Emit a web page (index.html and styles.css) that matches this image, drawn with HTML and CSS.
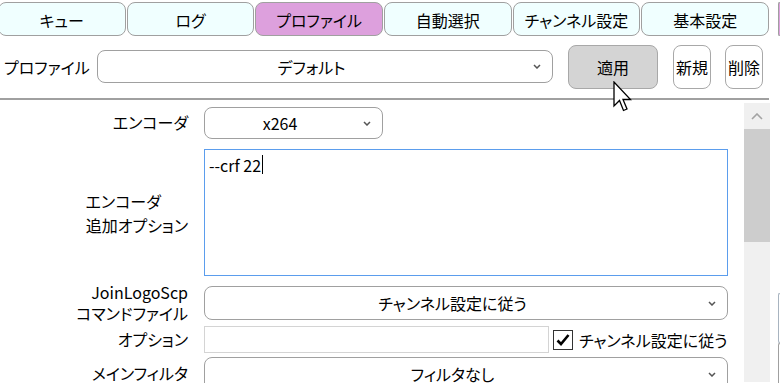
FILE: index.html
```html
<!DOCTYPE html>
<html>
<head>
    <title>プロファイル</title>
    <link rel="stylesheet" href="styles.css">
</head>
<body>
    <div class="screen">
        <div class="app">
            <nav class="tabs">
                <div class="tab">キュー</div>
                <div class="tab">ログ</div>
                <div class="tab active">プロファイル</div>
                <div class="tab">自動選択</div>
                <div class="tab">チャンネル設定</div>
                <div class="tab">基本設定</div>
            </nav>

            <div class="profile-bar">
                <span class="profile-label">プロファイル</span>
                <div class="select profile-select">
                    <span class="select-text">デフォルト</span>
                    <svg class="chevron" width="8" height="5" viewBox="0 0 8 5"><path d="M1 1 L4 4 L7 1" /></svg>
                </div>
                <button class="btn apply">適用</button>
                <button class="btn small new">新規</button>
                <button class="btn small">削除</button>
            </div>

            <div class="body">
                <div class="form">
                    <div class="row row-encoder">
                        <div class="label"><span>エンコーダ</span></div>
                        <div class="select encoder-select">
                            <span class="select-text">x264</span>
                            <svg class="chevron" width="8" height="5" viewBox="0 0 8 5"><path d="M1 1 L4 4 L7 1" /></svg>
                        </div>
                    </div>
                    <div class="row row-extra">
                        <div class="label"><span class="two-line">エンコーダ<br>追加オプション</span></div>
                        <div class="textarea"><span>--crf 22</span><span class="caret"></span></div>
                    </div>
                    <div class="row row-jls">
                        <div class="label"><span class="two-line tight">JoinLogoScp<br>コマンドファイル</span></div>
                        <div class="select wide-select">
                            <span class="select-text">チャンネル設定に従う</span>
                            <svg class="chevron" width="8" height="5" viewBox="0 0 8 5"><path d="M1 1 L4 4 L7 1" /></svg>
                        </div>
                    </div>
                    <div class="row row-opt">
                        <div class="label"><span>オプション</span></div>
                        <div class="opt-field">
                            <div class="textbox"></div>
                            <label class="check">
                                <span class="box">
                                    <svg width="16" height="16" viewBox="0 0 16 16"><path d="M2.5 8.5 L6 12 L13.5 3" /></svg>
                                </span>
                                <span>チャンネル設定に従う</span>
                            </label>
                        </div>
                    </div>
                    <div class="row row-filter">
                        <div class="label"><span>メインフィルタ</span></div>
                        <div class="select wide-select filter-select">
                            <span class="select-text">フィルタなし</span>
                            <svg class="chevron" width="8" height="5" viewBox="0 0 8 5"><path d="M1 1 L4 4 L7 1" /></svg>
                        </div>
                    </div>
                </div>

                <div class="scrollbar">
                    <div class="scroll-up">
                        <svg width="12" height="7" viewBox="0 0 12 7"><path d="M1 6 L6 1 L11 6" /></svg>
                    </div>
                    <div class="scroll-thumb"></div>
                </div>
            </div>
        </div>

        <div class="side">
            <div class="side-tab"></div>
            <div class="side-box"></div>
            <div class="side-box lower"></div>
        </div>

        <!-- mouse pointer over the apply button -->
        <svg class="cursor" width="20" height="32" viewBox="0 0 20 32">
            <path d="M1 1 L1 25 L6.5 19.5 L10.5 29.5 L14 28 L10 18.5 L17.5 18.5 Z" />
        </svg>
    </div>
</body>
</html>
```

FILE: styles.css
```css
* {
    box-sizing: border-box;
}
body {
    margin: 0;
    background: white;
    font-family: "Noto Sans CJK JP", "Noto Sans", sans-serif;
    font-size: 16px;
    font-feature-settings: "palt";
    color: #000;
    overflow: hidden;
}
.screen {
    position: relative;
    display: flex;
    width: 780px;
    height: 383px;
    overflow: hidden;
}
.app {
    flex: 0 0 770px;
    display: flex;
    flex-direction: column;
}

/* tabs */
.tabs {
    display: flex;
    gap: 1.2px;
    margin-left: -2px;
    padding-top: 2px;
}
.tab {
    flex: 0 0 127.5px;
    height: 34px;
    display: flex;
    align-items: center;
    justify-content: center;
    padding-top: 2px;
    background: #f0ffff;
    border: 1px solid #a0a0a0;
    border-radius: 8px;
    line-height: 1;
}
.tab.active {
    background: #dda0dd;
}

/* profile bar */
.profile-bar {
    display: flex;
    align-items: center;
    height: 45px;
    margin-top: 8px;
    padding-left: 4px;
    border-bottom: 2px solid #a0a0a0;
    box-sizing: content-box;
    padding-bottom: 9px;
    width: 765px;
}
.profile-label {
    width: 93px;
}
.select {
    display: flex;
    align-items: center;
    height: 33px;
    padding-left: 4px;
    background: white;
    border: 1px solid #a0a0a0;
    border-radius: 8px;
}
.select-text {
    flex: 1;
    text-align: center;
    line-height: 1;
    white-space: nowrap;
}
.chevron {
    flex: 0 0 8px;
    margin: 0 11px 0 12px;
}
.chevron path {
    fill: none;
    stroke: #555;
    stroke-width: 1.5;
}
.profile-select {
    width: 456px;
    height: 33px;
}
.btn {
    height: 44px;
    font: inherit;
    color: #000;
    background: white;
    border: 1px solid #a8a8a8;
    border-radius: 8px;
    padding: 0;
    line-height: 1;
}
.apply {
    width: 90px;
    margin-left: 15px;
    background: #d4d4d4;
}
.small {
    width: 38px;
    margin-left: 14px;
}
.new {
    margin-left: 15px;
}

/* settings body */
.body {
    display: flex;
    height: 282px;
}
.form {
    flex: 0 0 744px;
    padding-top: 7px;
}
.row {
    display: flex;
    align-items: center;
    gap: 16px;
}
.label {
    flex: 0 0 188px;
    display: flex;
    justify-content: flex-end;
    line-height: 1.2;
    white-space: nowrap;
}
.two-line {
    line-height: 24px;
}
.two-line.tight {
    line-height: 21px;
    text-align: right;
}
.encoder-select {
    width: 179px;
    height: 32px;
}
.row-extra {
    margin-top: 10px;
}
.textarea {
    width: 524px;
    height: 127px;
    border: 1px solid #5b9ded;
    padding: 5px 4px;
    display: flex;
    align-items: flex-start;
    line-height: 20px;
}
.caret {
    width: 1px;
    height: 19px;
    background: #000;
    margin-left: 1px;
}
.row-jls {
    margin-top: 6px;
}
.wide-select {
    width: 524px;
    height: 34px;
}
.row-opt {
    margin-top: 2px;
}
.opt-field {
    display: flex;
    align-items: center;
    width: 524px;
}
.textbox {
    width: 345px;
    height: 27px;
    border: 1px solid #d4d4d4;
}
.check {
    display: flex;
    align-items: center;
    margin-left: 4px;
    gap: 6px;
    line-height: 1;
    white-space: nowrap;
}
.box {
    flex: 0 0 20px;
    width: 20px;
    height: 20px;
    border: 1px solid #333;
    display: flex;
    align-items: center;
    justify-content: center;
}
.box path {
    fill: none;
    stroke: #000;
    stroke-width: 2.6;
}
.row-filter {
    margin-top: 4px;
}

/* scrollbar */
.scrollbar {
    flex: 0 0 26px;
    margin-top: 3px;
    background: #f0f0f0;
}
.scroll-up {
    height: 26px;
    display: flex;
    align-items: center;
    justify-content: center;
}
.scroll-up path {
    fill: none;
    stroke: #a3a3a3;
    stroke-width: 1.6;
}
.scroll-thumb {
    height: 113px;
    background: #cdcdcd;
}

/* edge of the neighbouring panel */
.side {
    flex: 1;
    padding-left: 8px;
}
.side-tab {
    margin-top: 2px;
    height: 34px;
    background: #dda0dd;
    border: 1px solid #a0a0a0;
    border-right: none;
    border-radius: 8px 0 0 8px;
}
.side-box {
    margin-top: 257px;
    height: 50px;
    border: 1px solid #a8b4c0;
    border-right: none;
    border-radius: 4px 0 0 4px;
}
.side-box.lower {
    margin-top: 0;
    height: 60px;
    border-color: #a0a0a0;
}

.cursor {
    position: absolute;
    left: 613px;
    top: 81px;
}
.cursor path {
    fill: white;
    stroke: #000;
    stroke-width: 1.3;
    stroke-linejoin: miter;
}
```
